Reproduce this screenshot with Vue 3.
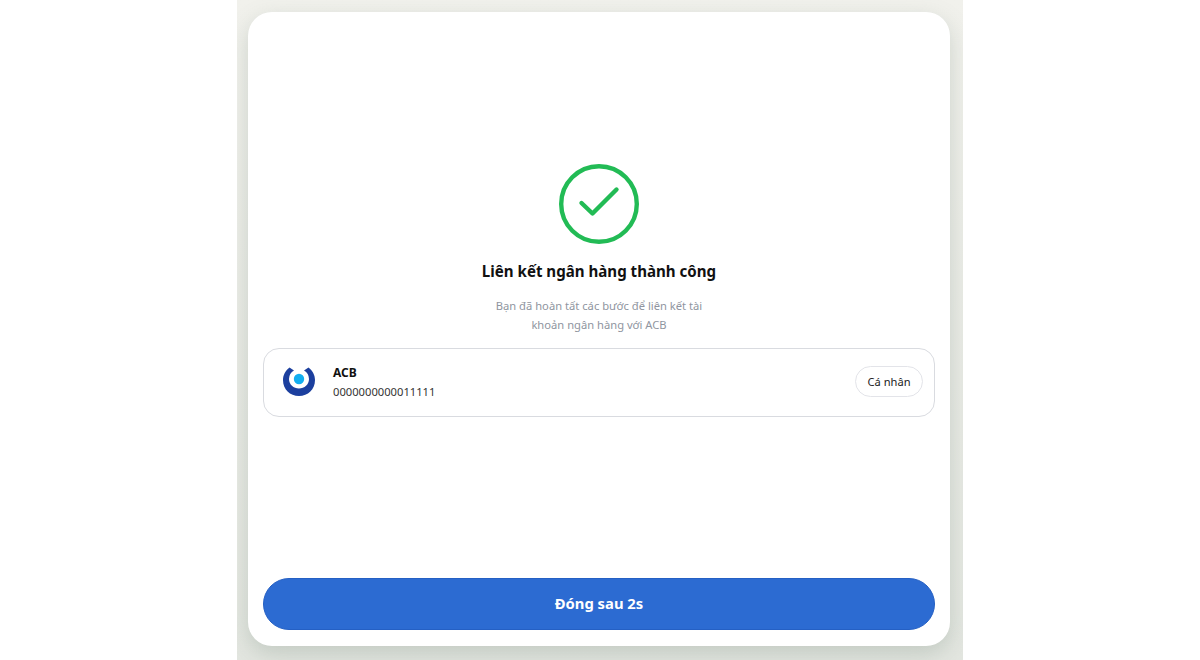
<script setup>
const account = { bank: 'ACB', number: '0000000000011111', type: 'Cá nhân' }
</script>

<template>
  <div class="page">
    <div class="panel">
      <div class="card">
        <main class="main">
          <svg class="check" width="80" height="80" viewBox="0 0 80 80" fill="none">
            <circle cx="40" cy="40" r="37.800" stroke="#22bb55" stroke-width="4.400" />
            <path d="M22.500 39 L33.500 49.500 L57.500 25.500" stroke="#22bb55" stroke-width="4.400" stroke-linecap="round" stroke-linejoin="round" />
          </svg>
          <h1 class="title">Liên kết ngân hàng thành công</h1>
          <p class="desc">Bạn đã hoàn tất các bước để liên kết tài<br />khoản ngân hàng với ACB</p>
          <div class="account">
            <svg class="logo" width="32" height="32" viewBox="0 0 32 32">
              <path d="M6.500 1.500 L11 4.500 A10 10 0 0 0 6 13 C6 18.500 10.500 22.500 16 22.500 C21.500 22.500 26 18.500 26 13 A10 10 0 0 0 21 4.500 L25.500 1.500 C29.500 4.500 32 9 32 14 C32 23.500 25 30 16 30 C7 30 0 23.500 0 14 C0 9 2.500 4.500 6.500 1.500 Z" fill="#1c3f9e" />
              <circle cx="16" cy="13" r="5.200" fill="#12aef0" />
            </svg>
            <div class="info">
              <div class="bank">{{ account.bank }}</div>
              <div class="number">{{ account.number }}</div>
            </div>
            <span class="tag">{{ account.type }}</span>
          </div>
        </main>
        <button class="close" type="button">Đóng sau 2s</button>
      </div>
    </div>
  </div>
</template>

<style>
html, body { margin: 0; background: #fff; }
</style>

<style scoped>
.page {
  width: 1200px;
  height: 660px;
  display: flex;
  justify-content: center;
  overflow: hidden;
  background: #fff;
  font-family: "Noto Sans", "DejaVu Sans", sans-serif;
}
.panel {
  width: 726px;
  height: 660px;
  box-sizing: border-box;
  padding: 12px 13px 14px 11px;
  background: linear-gradient(#f1f1ec, #e3e6e0);
  overflow: hidden;
}
.card {
  height: 634px;
  box-sizing: border-box;
  padding: 16px 15px;
  display: flex;
  flex-direction: column;
  background: #fff;
  border-radius: 24px;
  box-shadow: 0 8px 22px rgba(120, 140, 125, 0.3);
}
.main {
  flex: 1;
  display: flex;
  flex-direction: column;
  align-items: center;
  justify-content: center;
  padding-bottom: 25px;
}
.check { display: block; }
.title {
  margin: 17px 0 0;
  font-size: 15.100px;
  line-height: 20px;
  font-weight: 700;
  color: #111;
}
.desc {
  margin: 14.500px 0 0;
  font-size: 11.200px;
  line-height: 19px;
  text-align: center;
  color: #8f95a0;
}
.account {
  align-self: stretch;
  margin-top: 14.500px;
  height: 69px;
  box-sizing: border-box;
  display: flex;
  align-items: center;
  padding: 0 11px 0 19px;
  border: 1px solid #d9dbe0;
  border-radius: 16px;
}
.logo { display: block; flex: none; margin-top: -1px; }
.info {
  flex: 1;
  margin-left: 18px;
  min-width: 0;
  margin-top: -2px;
}
.bank {
  font-size: 12px;
  line-height: 19px;
  font-weight: 700;
  color: #111;
}
.number {
  font-size: 11.200px;
  line-height: 19px;
  color: #333;
}
.tag {
  height: 31px;
  box-sizing: border-box;
  padding: 0 11.500px;
  display: flex;
  align-items: center;
  font-size: 11.100px;
  color: #222;
  border: 1.500px solid #e3e4e9;
  border-radius: 16px;
  margin-top: -2px;
}
.close {
  height: 52px;
  flex: none;
  padding: 0 0 2px;
  border: 1px solid #2560c4;
  border-radius: 26px;
  background: #2c6bd2;
  color: #fff;
  font-family: inherit;
  font-size: 14.800px;
  font-weight: 700;
}
</style>
